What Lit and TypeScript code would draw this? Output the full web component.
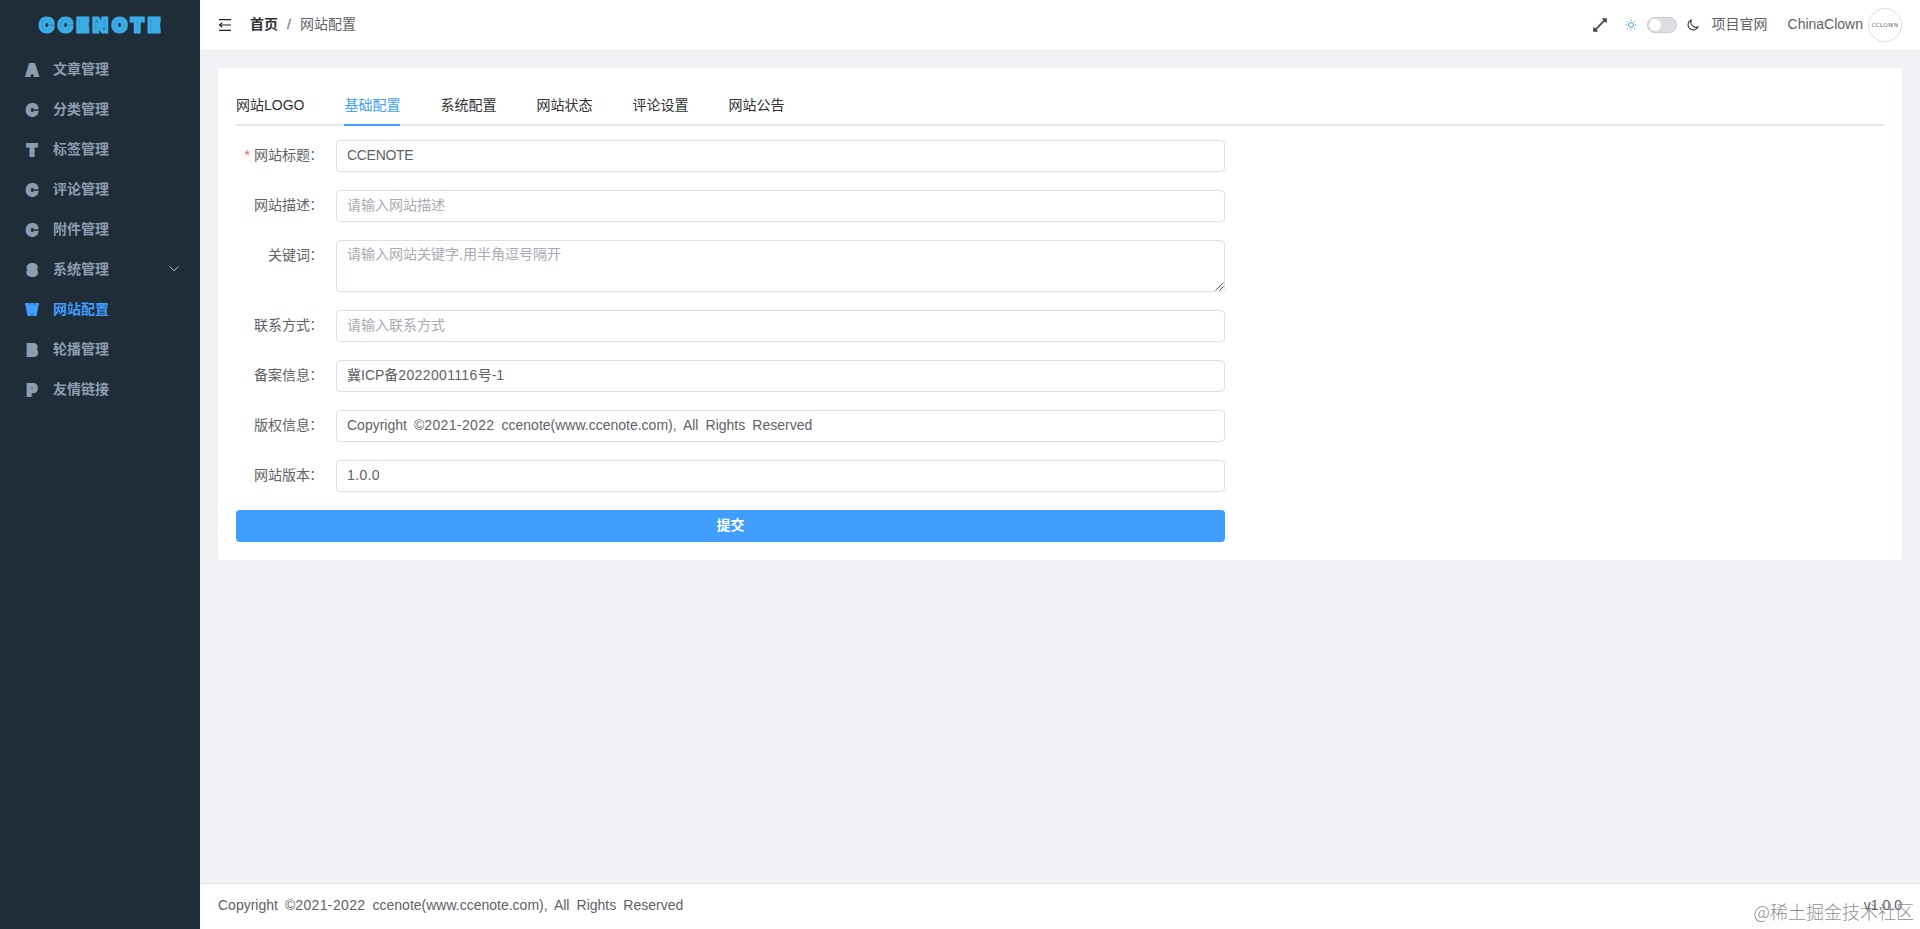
import { LitElement, html, css, svg } from "lit";
import { customElement } from "lit/decorators.js";
import { classMap } from "lit/directives/class-map.js";

interface MenuItem { letter: string; text: string; active?: boolean; children?: boolean }
interface Field { label: string; value?: string; placeholder?: string; required?: boolean; area?: boolean }

const MENU: MenuItem[] = [
  { letter: "A", text: "文章管理" },
  { letter: "C", text: "分类管理" },
  { letter: "T", text: "标签管理" },
  { letter: "C", text: "评论管理" },
  { letter: "C", text: "附件管理" },
  { letter: "S", text: "系统管理", children: true },
  { letter: "W", text: "网站配置", active: true },
  { letter: "B", text: "轮播管理" },
  { letter: "P", text: "友情链接" },
];

const TABS = ["网站LOGO", "基础配置", "系统配置", "网站状态", "评论设置", "网站公告"];

const COPYRIGHT = "Copyright ©2021-2022 ccenote(www.ccenote.com), All Rights Reserved";

const FIELDS: Field[] = [
  { label: "网站标题", value: "CCENOTE", required: true },
  { label: "网站描述", placeholder: "请输入网站描述" },
  { label: "关键词", placeholder: "请输入网站关键字,用半角逗号隔开", area: true },
  { label: "联系方式", placeholder: "请输入联系方式" },
  { label: "备案信息", value: "冀ICP备2022001116号-1" },
  { label: "版权信息", value: COPYRIGHT },
  { label: "网站版本", value: "1.0.0" },
];

const RAYS = [0, 45, 90, 135, 180, 225, 270, 315];

/** Gives runs of digits slightly looser tracking than the words round them. */
const spaced = (text: string) =>
  text.split(/(\d[\d.-]*)/).map((part, i) => (i % 2 ? html`<span class="num">${part}</span>` : part));

@customElement("app-root")
export class AppRoot extends LitElement {
  static styles = css`
    :host {
      display: grid;
      grid-template-columns: 200px 1fr;
      height: 100vh;
      font: 14px/20px "Liberation Sans", "Noto Sans CJK SC", sans-serif;
      color: #606266;
      background: #f0f2f5;
      overflow: hidden;
    }
    * { box-sizing: border-box; }
    .side { background: #1f2d38; }
    .logo {
      height: 49px;
      display: flex;
      align-items: center;
      justify-content: center;
      font: 900 19px/49px Inter, sans-serif;
      color: #2b86b9;
      -webkit-text-stroke: 3.1px #3bace6;
      letter-spacing: 4.5px;
      padding: 2px 0 0 4px;
    }
    .item {
      height: 40px;
      display: flex;
      align-items: center;
      padding: 0 20px 0 25px;
      font-weight: 700;
      color: #8c9db0;
    }
    .item.active { color: #409eff; }
    .letter {
      width: 14px;
      margin-right: 14px;
      display: flex;
      justify-content: center;
      font: 900 16px/20px Inter, sans-serif;
      -webkit-text-stroke: 1.8px currentColor;
      padding-top: 1px;
    }
    .active .letter { font-size: 15px; transform: scaleX(0.78); }
    .grow { flex: 1; }
    .arrow { width: 12px; height: 12px; }
    .page { display: flex; flex-direction: column; min-width: 0; }
    .head {
      height: 50px;
      background: #fff;
      display: flex;
      align-items: center;
      padding: 0 18px;
    }
    .head > span:not(.switch, .avatar) { padding-bottom: 2px; }
    .fold { width: 14px; height: 14px; margin-right: 18px; }
    .home { font-weight: 700; color: #303133; }
    .sep { margin: 0 9px; color: #909399; font-weight: 700; transform: skewX(-6deg); }
    .full { width: 16px; height: 16px; margin-right: 17px; }
    .sun { width: 12px; height: 12px; }
    .switch {
      width: 30px;
      height: 16px;
      margin: 0 10px;
      border: 1px solid #c8cad0;
      border-radius: 8px;
      background: #dddde4;
      display: flex;
      align-items: center;
      padding-left: 1px;
    }
    .knob { width: 12px; height: 12px; border-radius: 50%; background: #fff; }
    .moon { width: 12px; height: 12px; margin-right: 13px; }
    .site { margin-right: 20px; }
    .avatar {
      width: 34px;
      height: 34px;
      margin-left: 5px;
      border: 1px solid #dcdfe6;
      border-radius: 50%;
      display: flex;
      align-items: center;
      justify-content: center;
      font: 5.5px/8px "DejaVu Sans", sans-serif;
      letter-spacing: 0.4px;
      color: #666;
      white-space: nowrap;
    }
    .body { flex: 1; padding: 18px; }
    .card { background: #fff; border-radius: 2px; padding: 18px; height: 492px; }
    .tabs {
      display: flex;
      gap: 40px;
      height: 40px;
      border-bottom: 2px solid #e4e7ed;
      color: #303133;
      line-height: 38px;
    }
    .tab { height: 40px; white-space: nowrap; }
    .tab.on { color: #409eff; border-bottom: 2px solid #409eff; }
    .form { display: flex; flex-direction: column; gap: 18px; width: 989px; padding-top: 14px; }
    .row { display: flex; }
    .label { width: 100px; line-height: 30px; padding-right: 12px; display: flex; justify-content: flex-end; }
    .colon { width: 14px; text-indent: -0.5px; font-size: 13px; }
    .star { color: #f56c6c; margin-right: 4px; font-size: 15px; }
    .input {
      flex: 1;
      height: 32px;
      border: 1px solid #dcdfe6;
      border-radius: 4px;
      padding: 0 10px;
      line-height: 28px;
      position: relative;
    }
    .input.area { line-height: 27px; height: 52px; }
    .input.hint { color: #a8abb2; }
    .caps { letter-spacing: -0.3px; }
    .wide { word-spacing: 3.2px; }
    .num { letter-spacing: 0.35px; }
    .grip { position: absolute; right: 0; bottom: 0; width: 9px; height: 9px; }
    .submit {
      height: 32px;
      border-radius: 4px;
      background: #409eff;
      color: #fff;
      font-weight: 700;
      line-height: 30px;
      text-align: center;
    }
    .foot {
      height: 46px;
      border-top: 1px solid #dcdfe6;
      background: #fff;
      display: flex;
      align-items: center;
      justify-content: space-between;
      padding: 0 18px 3px;
    }
    .mark {
      position: absolute;
      right: 6px;
      bottom: 5px;
      font: 300 18px/26px "Noto Sans CJK SC", sans-serif;
      color: rgba(110, 110, 115, 0.8);
    }
  `;

  private menuItem(m: MenuItem) {
    return html`<div class=${classMap({ item: true, active: !!m.active })}>
      <span class="letter">${m.letter}</span><span>${m.text}</span>
      ${m.children
        ? html`<span class="grow"></span><svg class="arrow" viewBox="0 0 12 12" fill="none" stroke="#a9b7c6"><path d="M1.5 3.5 6 7.8 10.5 3.5" /></svg>`
        : null}
    </div>`;
  }

  private field(f: Field) {
    const classes = {
      input: true,
      area: !!f.area,
      hint: !f.value,
      wide: f.value === COPYRIGHT,
      caps: !!f.required,
    };
    return html`<div class="row">
      <div class="label">${f.required ? html`<span class="star">*</span>` : null}<span>${f.label}</span><span class="colon">：</span></div>
      <div class=${classMap(classes)}>${f.value ? spaced(f.value) : f.placeholder}${f.area
        ? html`<svg class="grip" viewBox="0 0 9 9" stroke="#555" fill="none"><path d="M.5 8.5l8-8M4.5 8.5l4-4" /></svg>`
        : null}</div>
    </div>`;
  }

  render() {
    return html`
      <div class="side">
        <div class="logo">CCENOTE</div>
        ${MENU.map((m) => this.menuItem(m))}
      </div>
      <div class="page">
        <div class="head">
          <svg class="fold" viewBox="0 0 14 14" fill="none" stroke="#222" stroke-width="1.2">
            <path d="M1 1.6h12M2 7h11M1 12.4h12M4.2 4.6 1.6 7l2.6 2.4" />
          </svg>
          <span class="home">首页</span><span class="sep">/</span><span>网站配置</span>
          <span class="grow"></span>
          <svg class="full" viewBox="0 0 16 16" stroke="#444" stroke-width="1.7" fill="#444">
            <path d="M8.8 7.2 13 3M7.2 8.8 3 13M8.8 7.2 7.2 8.8" />
            <path stroke="none" d="M10 1.2h4.8V6L13 5 11 3zM6 14.8H1.2V10L3 11 5 13z" />
          </svg>
          <svg class="sun" viewBox="0 0 12 12" fill="none" stroke="#2f8fe0" stroke-width=".9">
            <circle cx="6" cy="6" r="2.4" />
            ${RAYS.map((a) => svg`<path d="M6 .6v1.3" transform="rotate(${a} 6 6)" />`)}
          </svg>
          <span class="switch"><span class="knob"></span></span>
          <svg class="moon" viewBox="0 0 12 12" fill="none" stroke="#333" stroke-width="1.1">
            <path d="M4.3 1A5.2 5.2 0 1 0 11 8 5.3 5.3 0 0 1 4.3 1z" />
          </svg>
          <span class="site">项目官网</span><span>ChinaClown</span>
          <span class="avatar">CCLOWN</span>
        </div>
        <div class="body">
          <div class="card">
            <div class="tabs">${TABS.map((t, i) => html`<div class=${classMap({ tab: true, on: i === 1 })}>${t}</div>`)}</div>
            <div class="form">
              ${FIELDS.map((f) => this.field(f))}
              <div class="submit">提交</div>
            </div>
          </div>
        </div>
        <div class="foot"><span class="wide">${spaced(COPYRIGHT)}</span><span>v1.0.0</span></div>
      </div>
      <div class="mark">@稀土掘金技术社区</div>
    `;
  }
}
